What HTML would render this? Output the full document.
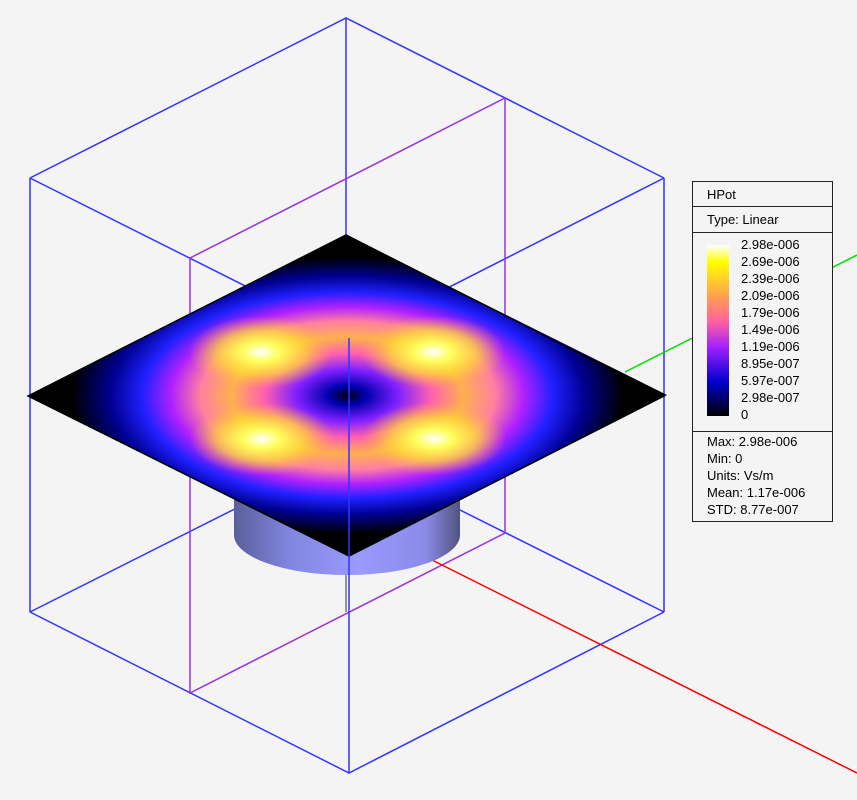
<!DOCTYPE html>
<html><head><style>
body{margin:0;width:857px;height:800px;background:#f4f4f4;overflow:hidden;font-family:"Liberation Sans",sans-serif;}
#leg{position:absolute;left:692px;top:181px;width:139px;height:339px;border:1px solid #222;background:#f4f4f4;font-size:13px;color:#000;}
.r{position:absolute;left:0;width:139px;border-bottom:1px solid #222;}
.t{position:absolute;left:14px;line-height:17px;}
</style></head><body>
<svg width="857" height="800" style="position:absolute;left:0;top:0">
<defs>
<radialGradient id="rg" cx="0.5" cy="0.5" r="0.71">
<stop offset="0" stop-color="#000010"/>
<stop offset="0.06" stop-color="#0000b0"/>
<stop offset="0.16" stop-color="#8020ff"/>
<stop offset="0.26" stop-color="#ff60b0"/>
<stop offset="0.36" stop-color="#ffb050"/>
<stop offset="0.46" stop-color="#ff80a0"/>
<stop offset="0.55" stop-color="#b020ff"/>
<stop offset="0.64" stop-color="#2020ff"/>
<stop offset="0.74" stop-color="#000090"/>
<stop offset="0.86" stop-color="#000000"/>
</radialGradient>
<radialGradient id="hs"><stop offset="0" stop-color="#ffffff"/><stop offset="0.25" stop-color="#ffff60"/><stop offset="0.6" stop-color="#ffe030" stop-opacity="0.7"/><stop offset="1" stop-color="#ffb040" stop-opacity="0"/></radialGradient>
<linearGradient id="cyl" x1="0" x2="1"><stop offset="0" stop-color="#5a5f9a"/><stop offset="0.25" stop-color="#8186e0"/><stop offset="0.55" stop-color="#9a9aff"/><stop offset="0.85" stop-color="#8a8ae8"/><stop offset="1" stop-color="#50547e"/></linearGradient>
<linearGradient id="cb" x1="0" y1="0" x2="0" y2="1"><stop offset="0" stop-color="#ffffff"/><stop offset="0.1" stop-color="#ffff00"/><stop offset="0.3" stop-color="#ffa050"/><stop offset="0.45" stop-color="#ff60a0"/><stop offset="0.6" stop-color="#a020ff"/><stop offset="0.8" stop-color="#0000d0"/><stop offset="1" stop-color="#000000"/></linearGradient>
</defs>
<g fill="none" stroke-width="1.5">
<polyline points="30,178 346,18 664,178" stroke="#3333ff"/>
<line x1="346" y1="18" x2="346" y2="453" stroke="#3333ff"/>
<polyline points="30,612 346,453 664,612" stroke="#3333ff"/>
<line x1="30" y1="178" x2="30" y2="612" stroke="#3333ff"/>
<line x1="664" y1="178" x2="664" y2="612" stroke="#3333ff"/>
<polyline points="30,178 349,338 664,178" stroke="#3333ff"/>
<polyline points="30,612 349,773 664,612" stroke="#3333ff"/>
<polygon points="190,258 505,98 505,533 190,693" stroke="#9933dd"/>
<line x1="432" y1="560" x2="857" y2="773" stroke="#ff0000"/>
<line x1="625" y1="372" x2="857" y2="255" stroke="#00dd00"/>
<line x1="346" y1="556" x2="346" y2="612" stroke="#333" stroke-width="1"/>
</g>
<path d="M234,500 L234,535 A113,40 0 0 0 460,535 L460,500 Z" fill="url(#cyl)"/>
<g transform="matrix(318,-161,321,160,28,396)">
<rect x="0" y="0" width="1" height="1" fill="url(#rg)"/>
<circle cx="0.77" cy="0.5" r="0.16" fill="url(#hs)"/>
<circle cx="0.23" cy="0.5" r="0.16" fill="url(#hs)"/>
<circle cx="0.5" cy="0.77" r="0.16" fill="url(#hs)"/>
<circle cx="0.5" cy="0.23" r="0.16" fill="url(#hs)"/>
</g>
<polygon points="28,396 346,235 664,396 349,556" fill="none" stroke="#000" stroke-width="1.5"/>
<line x1="349" y1="338" x2="349" y2="556" stroke="#3333ff" stroke-width="1.5"/>
<line x1="349" y1="556" x2="349" y2="773" stroke="#3333ff" stroke-width="1.5"/>
</svg>
<div id="leg">
<div class="r" style="top:0;height:24px"><span class="t" style="top:4px;">HPot</span></div>
<div class="r" style="top:25px;height:25px"><span class="t" style="top:4px;">Type: Linear</span></div>
<div class="r" style="top:51px;height:198px">
<svg width="22" height="171" style="position:absolute;left:14px;top:12px"><rect width="22" height="171" fill="url(#cb)"/></svg>
<div style="position:absolute;left:48px;top:3px;line-height:17px;">2.98e-006<br>2.69e-006<br>2.39e-006<br>2.09e-006<br>1.79e-006<br>1.49e-006<br>1.19e-006<br>8.95e-007<br>5.97e-007<br>2.98e-007<br>0</div>
</div>
<div class="t" style="top:251px;">Max: 2.98e-006<br>Min: 0<br>Units: Vs/m<br>Mean: 1.17e-006<br>STD: 8.77e-007</div>
</div>
</body></html>
